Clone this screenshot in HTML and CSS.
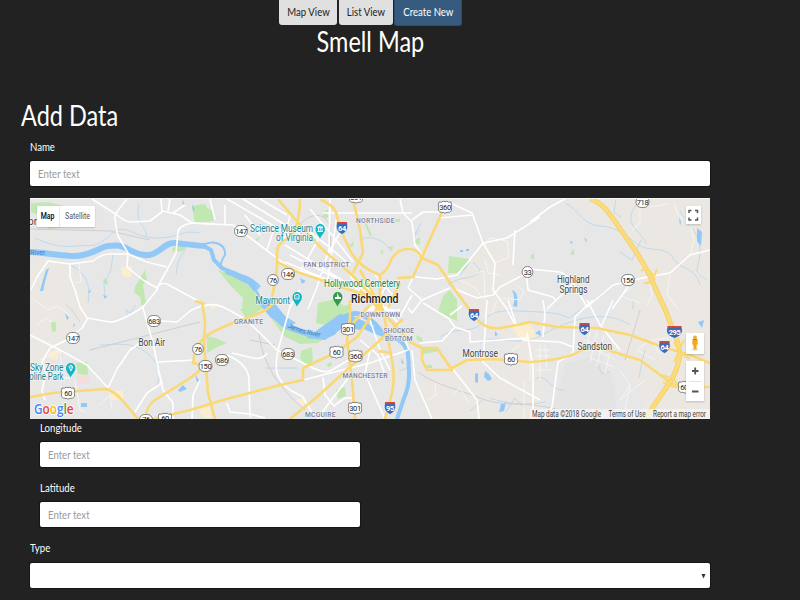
FILE: index.html
```html
<!DOCTYPE html>
<html lang="en">
<head>
<meta charset="utf-8">
<title>Smell Map</title>
<link rel="stylesheet" href="styles.css">
</head>
<body>
<div class="page">
  <nav class="tabs">
    <button class="tab tab-map"><span>Map View</span></button>
    <button class="tab tab-list"><span>List View</span></button>
    <button class="tab tab-new active"><span>Create New</span></button>
  </nav>
  <h1><span>Smell Map</span></h1>
  <h2><span>Add Data</span></h2>
  <form class="form">
    <label><span>Name</span></label>
    <div class="field"><span>Enter text</span></div>
    <div class="map">
      <svg class="canvas" viewBox="30 198 680 221" width="680" height="221">
        <defs>
          <g id="p3"><rect x="-6.5" y="-5.5" width="13" height="11" rx="5.2"/></g>
          <g id="p2"><rect x="-5.3" y="-5.5" width="10.6" height="11" rx="5.2"/></g>
          <g id="u3"><path d="M-6-5Q-3-4.2-2-5.8Q0-4.8 2-5.8Q3-4.2 6-5Q7.3-2 6.2 0Q7.6 4 4.5 5.2Q1.5 5 0 6.2Q-1.5 5-4.5 5.2Q-7.6 4-6.2 0Q-7.3-2-6-5Z"/></g>
          <g id="i"><path fill="#3d6cb5" stroke="#fff" stroke-width=".6" d="M-5-5.5H5C6.500-1 6 3.500 0 6.500C-6 3.500-6.500-1-5-5.500Z"/><path fill="#d8433c" d="M-4.900-6H4.900L5.200-4.200H-5.200Z"/></g>
          <path id="jr" d="M287 327Q302 335 323 337"/>
        </defs>
        <rect x="30" y="198" width="680" height="221" fill="#e7e7e7"/>
        <g fill="#ebe8e3">
          <path d="M30 262L48 259 70 264 92 300 83 325 60 345 40 390 30 395Z"/>
          <path d="M565 199H710V419H650L625 360 600 330 640 290 625 240Z"/>
          <path d="M452 285L485 243 514 232 516 290 507 320 540 330 545 419H430L416 385 470 360 520 355 490 325Z"/>
        </g>
        <path fill="#e4e4e5" d="M566 363L600 355 614 382 616 411H552Z"/>
        <g fill="#fbeed0">
          <path d="M121 267L132 266 131 278 122 276Z"/><path d="M50 352L60 350 57 360 49 358Z"/><path d="M511 326L530 322 537 338 523 343Z"/><path d="M108 390L123 391 123 399 112 400Z"/><path d="M199 409L210 407 211 418 202 417Z"/><path d="M296 400L305 398 304 407Z"/><path d="M209 303L217 307 212 310Z"/>
        </g>
        <path fill="#f4dddd" d="M77 376H90V384H78Z"/>
        <g class="park">
          <path d="M31 203L48 202 65 206V227L48 229 42 216 31 212Z"/>
          <path d="M192 206L205 204 207 208 214 211V221L195 223Z"/>
          <path d="M135 287L145 270 147 280 143 285 146 303 142 304 140 297 134 292Z"/>
          <path d="M172 248L180 245 187 248 182 251 173 252Z"/>
          <path d="M104 278L108 282 107 285 103 282ZM51 322H56V331L52 332ZM144 299L147 301 145 305Z"/>
          <path d="M218 270L233 275 257 291 268 306 254 313 242 307 243 298 230 285Z"/>
          <path d="M240 309L266 300 255 315 246 318Z"/>
          <path d="M207 336L216 338 227 343 217 347 207 353Z"/>
          <path d="M318 303L336 299 344 306 352 304 344 319 330 326 316 323Z"/>
          <path d="M266 311L285 327 305 336 325 338 318 343 300 344 284 336Z"/>
          <path d="M301 351L312 347 313 361 307 368 300 358Z"/>
          <path d="M336 390L345 387 346 396 338 399ZM327 364L331 362 332 366 328 367Z"/>
          <path d="M449 256L469 259 466 269 458 273 448 273Z"/>
          <path d="M450 290L457 300 457 321 438 312 443 296Z"/>
          <path d="M423 349L438 347 439 351 423 354ZM416 335L422 338 423 343 417 340ZM425 365H432V368H425Z"/>
          <path d="M76 363L87 362 88 375 78 374Z"/>
          <path d="M323 212L328 209V218L323 217ZM395 219H400V222H395ZM415 240L420 237V245L415 243ZM380 252L383 250V255ZM366 222L372 235 370 236 365 225ZM388 247L393 246 392 252ZM255 240L260 236 258 241ZM349 247L354 240 353 247ZM531 254H534V259H531ZM571 252L574 249V255H571ZM141 300H146V305H141Z"/>
        </g>
        <g class="stream">
          <path d="M35 238C45 243 60 248 75 246S95 250 110 235 135 240 160 238 180 230 200 233"/>
          <path d="M70 265Q93 275 88 303M113 254L111 270 104 284 105 297M139 204C134 225 148 225 146 237M143 253L147 262M185 250L178 262 176 275"/>
          <path d="M136 305L130 313 126 310 128 317M66 305L72 310 80 322M100 345C115 345 135 340 150 356S158 375 157 387"/>
          <path d="M359 240C370 234 385 240 390 250M389 285L384 293M420 230L413 238 421 223"/>
          <path d="M565 203C580 210 582 225 600 226S625 235 637 244 665 245 673 258 695 266 700 285"/>
          <path d="M616 199L614 212 621 217M636 205C622 225 640 230 646 243M620 252L632 260 641 240M680 210C685 225 700 230 700 250S690 270 707 280"/>
          <path d="M448 285C460 275 478 280 480 270L473 262M440 337C458 325 472 335 483 322S500 310 540 312 560 325 580 310"/>
          <path d="M480 343C500 332 510 348 538 337 560 325 600 305 630 325M490 398C510 405 530 405 545 402M598 365L602 374 610 372M645 350L642 362 639 378M686 205Q688 218 700 222M633 300L633 309M413 360Q405 372 399 370M266 368L298 368"/>
          <path d="M535 380C545 370 550 392 565 390M506 412L515 398 525 408M460 275L470 262M470 411L484 399"/>
        </g>
        <g class="water">
          <path class="river" d="M30 252C50 253 60 256 75 256S100 247 108 246 120 245 126 248 139 256 149 255 165 242 175 243 200 246 206 246"/>
          <path stroke-width="4" d="M204 246L211 250 214 260 222 268 234 274"/>
          <path class="river" d="M226 271L234 274 250 282 257 290"/>
          <path d="M205 244C216 240 226 245 225 255Q221 260 220 269M234 274Q250 275 260 287M250 285Q258 290 259 297" stroke-width="2"/>
          <path class="river" d="M262 302C275 312 280 325 291 328S308 336 323 335 332 329 341 323 352 318 360 323 375 332 385 334"/>
          <path d="M345 317Q355 310 366 317T382 333" stroke-width="5"/>
          <path d="M380 334C392 336 407 341 408 355S411 383 404 398L397 419" stroke-width="4"/>
        </g>
        <g fill="#91c8f7">
          <path d="M258 302L272 300 285 316 296 323 286 327 270 317Z"/>
          <path d="M340 314L357 318 370 324 360 330 344 327 325 340 306 338Z"/>
          <path d="M46 270L49 268 46 278 43 291 40 291 43 280Z"/><path d="M65 313L69 318 67 320ZM73 325L75 323 74 328ZM103 295L107 296 105 299ZM91 289L90 293 88 292Z"/>
          <path d="M178 390L183 385 187 389 180 392ZM81 403H87V407H81Z"/><path d="M485 371L489 374 492 379 488 381 484 377ZM475 374L478 373 478 383 475 382Z"/><path d="M697 228L702 232 701 246 697 241ZM679 217L681 222 680 226ZM698 322L704 320 702 328Z"/>
          <path d="M512 290Q519 292 517 307L513 306Q516 299 512 290ZM460 250H463V252H460ZM466 249H469V251H466ZM535 333L540 330 541 336ZM300 278L306 281 302 284ZM495 331L498 335 495 336ZM570 241L573 242 571 244ZM584 237L587 240 586 242ZM192 204L195 210 193 211ZM182 199L185 205 183 204ZM195 375L200 381 197 382ZM499 412L501 404 506 402 504 411ZM401 358L404 363 402 364ZM673 332L676 331 675 336Z"/>
        </g>
        <path class="rail" d="M30 229L110 231 150 240M90 350L200 322M418 372C435 385 455 388 480 398S520 400 560 410M250 340L275 345M259 333C262 360 275 385 305 410M300 224Q320 206 330 225L331 250M640 310L625 360"/>
        <g class="minor">
          <path d="M75 283L81 282 79 264M31 297L48 310 58 306 70 316M40 360L60 350 62 370M52 375L60 380 72 377M75 380L80 410 85 412M36 325L46 318 52 322M100 405L110 395 112 410M40 375L70 378"/>
          <path d="M485 245L490 238 507 241 509 257 497 262M485 260L488 273 500 275M460 280L475 288 482 298M476 273L484 271 485 300M503 298L520 300 524 291 517 285M497 300L492 314M452 395L460 388 468 402M435 385L436 395 428 400M520 345L512 350 518 362M530 345V380M535 350H550M535 356H550M540 345V380M545 345L547 370M535 370H552M524 380V418"/>
          <path d="M590 332L587 345 615 360M585 340L618 355M597 332L590 362M604 335L597 366M612 342L605 374M590 358L615 367M630 385L620 400 645 380M620 370L630 385 625 410M670 275L667 295 679 310M640 207V223L632 230M674 203L678 215 690 223 694 240 690 255M632 287L621 296 640 303M647 305L652 295 650 285M668 204L650 207M650 340L637 350 655 360M660 355L652 340 668 338"/>
        </g>
        <g class="road">
          <path d="M127 199C120 208 114 214 115 219S116 230 118 236L128 253 127 267 143 280 157 288Q160 282 167 284L200 302"/>
          <path d="M92 199L117 215Q125 222 132 222L150 221 163 211 180 215 192 223M162 211L161 199M168 211L170 199M173 213L185 205"/>
          <path d="M31 290L37 277 48 261 70 264 93 261Q100 255 108 254L128 254 147 262 167 267"/>
          <path d="M215 224L192 223Q178 226 178 232L176 253 167 270Q158 285 157 290L143 307Q120 322 110 322L87 318 80 307 75 290 70 277V264"/>
          <path d="M143 308L153 343 158 367 163 390 173 403V419M30 335L60 350 87 365 108 388 117 369 130 350 140 343M50 348L67 340 82 328 88 318M50 348L42 362 46 373 42 390 45 400M147 320L177 322 190 311Q210 300 225 308T245 319L260 333 277 350 307 365Q325 375 332 370L352 358"/>
          <path d="M158 362L195 360M135 412L147 393 162 383 158 370M300 290L290 307 278 350Q275 365 277 373T290 390L303 397 312 413 323 419M227 355Q250 365 249 382L250 417M232 353L253 358Q263 360 267 353M227 403L230 412 250 414 265 418M200 380L193 395 192 419M303 380L370 363 408 350M323 377L325 395 335 407M317 419L352 373M335 405L345 398 355 398"/>
          <path d="M190 223L233 225 257 243 290 268 330 280M227 199L293 237M210 199L215 220M225 205V224M243 199L310 240M260 199L287 215M245 215L260 235M275 226L267 250M290 215L284 240M330 199L329 250 317 287 308 309M323 213H412M310 209L336 240 353 262M300 225L328 246 350 265M285 245L350 285M290 255L370 295M285 262L340 285M318 240L301 270M337 215L327 285M346 222L328 254"/>
          <path d="M400 199L403 213 412 222 415 245 422 255M412 220L423 212H440M440 218L472 215M448 202L472 213 483 243 495 263 493 290 507 309 515 325M540 217L507 238 483 243 468 262 457 275 437 279 415 277M515 230L513 265M453 288L477 298 493 295 500 287 523 275 530 269 560 272Q570 277 573 283L587 307M587 307L613 285 647 277 670 273 690 255 710 250M530 222L550 207 565 199M526 270L528 290 553 297 556 301M547 309L573 284M628 287L612 309M413 277L408 288 422 300 450 288M422 300L412 313 408 308M412 295L399 318"/>
          <path d="M587 300L600 325 620 350M613 300L602 325M593 300L575 317 573 353 558 362 552 407 545 419M543 300L545 313 543 337M522 340L560 342 573 347M487 300L483 362 500 378 540 400M452 368L477 400 479 419M412 350L415 380 432 419M420 343L442 341 455 327 448 318 423 303M455 327L470 332V342L527 338M450 315L462 306M527 333L533 367V419M508 300L517 327M370 320L380 350 390 370M360 340L378 355 385 375M370 350L365 374 385 419M409 350L405 340"/>
          <path d="M355 320L375 305 363 290M375 275L397 300M365 285L400 325M350 276L380 310M390 280L372 310M400 283L385 310M368 310H400M377 304L402 316"/>
        </g>
        <g class="highway">
          <path d="M30 397L53 393Q90 390 107 389 116 393 123 401L138 419M145 419Q147 405 155 400T187 380 193 363Q195 345 205 337T247 318 272 297Q278 270 277 257T285 240 297 223 300 199"/>
          <path d="M153 419L190 410 223 400 280 385 303 380V368L337 352 357 337 370 318 380 305M202 303L205 320 204 343 206 367 208 393 215 419M195 301L205 304M290 419L317 397 350 367 377 343 403 319"/>
          <path d="M278 199L293 217 323 250 350 273 380 304M320 199Q337 207 337 217L342 233 350 250Q358 267 380 275 388 270 391 260 397 249 408 249T422 258L438 265Q445 275 450 283L475 317Q485 330 500 328T530 322L557 327 597 328 630 335 663 347 690 355 710 363"/>
          <path d="M277 262L300 273 327 282 370 297 387 317M353 199L360 230 363 253 353 273M445 202L440 217 422 257 413 277 397 278M350 300V318L347 340 352 380 355 419M380 275V300L385 320 390 350Q396 375 392 393L385 419"/>
          <path d="M360 270L385 315M360 290L395 325M400 283L388 307M387 317L410 342 422 348H437L452 370H427L422 360V348M452 368L467 360 493 359 530 362Q565 360 580 351T610 351L640 360 663 377Q673 387 685 387H710M378 351L391 353M370 305L353 323"/>
          <path class="wide-edge" d="M590 199C605 203 610 215 630 243S653 285 665 309L678 343Q683 358 672 379L645 419"/>
          <path class="wide" d="M590 199C605 203 610 215 630 243S653 285 665 309L678 343Q683 358 672 379L645 419"/>
          <path class="ramp" d="M641 271Q650 265 655 280M644 283Q652 285 657 269M661 375Q671 376 681 387 671 388 663 382M674 342Q680 355 690 359M684 340L674 362"/>
        </g>
        <g class="shield">
          <use href="#p3" x="241" y="231"/><use href="#p3" x="288" y="274"/><use href="#p2" x="273" y="280"/><use href="#p3" x="154" y="321"/><use href="#p3" x="73" y="338"/><use href="#p2" x="198" y="349"/><use href="#p3" x="222" y="360"/><use href="#p3" x="205.500" y="366"/><use href="#p3" x="288" y="354"/><use href="#p3" x="628" y="280"/><use href="#p3" x="642.500" y="202"/><use href="#p2" x="527.500" y="272"/><use href="#p3" x="146" y="420"/>
          <use href="#u3" x="445" y="207"/><use href="#u3" x="356" y="197"/><use href="#u3" x="348" y="329"/><use href="#u3" x="336.500" y="352"/><use href="#u3" x="355.500" y="356"/><use href="#u3" x="355" y="408"/><use href="#u3" x="68" y="393"/><use href="#u3" x="511" y="359"/><use href="#u3" x="165" y="419"/><use href="#u3" x="685" y="387"/>
        </g>
        <g class="num">
          <text x="241" y="233.700">147</text><text x="288" y="276.700">146</text><text x="273" y="282.700">76</text><text x="154" y="323.700">683</text><text x="73" y="340.700">147</text><text x="198" y="351.700">76</text><text x="222" y="362.700">686</text><text x="205.500" y="368.700">150</text><text x="288" y="356.700">683</text><text x="628" y="282.700">156</text><text x="642.500" y="204.700">718</text><text x="527.500" y="274.700">33</text><text x="146" y="422">76</text>
          <text x="445" y="209.700">360</text><text x="356" y="200">301</text><text x="348" y="331.700">301</text><text x="336.500" y="354.700">60</text><text x="355.500" y="358.700">360</text><text x="355" y="410.700">301</text><text x="68" y="395.700">60</text><text x="511" y="361.700">60</text><text x="165" y="421">60</text><text x="684" y="389.700">60</text>
        </g>
        <g><use href="#i" x="342" y="228"/><use href="#i" x="474" y="315"/><use href="#i" x="584.500" y="329"/><use href="#i" x="664.500" y="347"/><use href="#i" x="390" y="408"/><use href="#i" transform="translate(674.500 332) scale(1.400 1)"/></g>
        <g class="num inum"><text x="342" y="230.800">64</text><text x="474" y="317.800">64</text><text x="584.500" y="331.800">64</text><text x="664.500" y="349.800">64</text><text x="390" y="410.800">95</text><text x="674.500" y="334.800">295</text></g>
        <g class="pin">
          <path id="pin" fill="#12b5c4" d="M320 239C319 235 315.500 233.500 315.500 229A4.700 5 0 0 1 324.900 229C324.900 233.500 321 235 320 239Z"/>
          <use href="#pin" x="-23" y="68"/><use href="#pin" x="-249.500" y="139"/>
          <path fill="#2fa04a" d="M337.500 307C336.500 303 333 301.500 333 297A4.700 5 0 0 1 342.400 297C342.400 301.500 338.500 303 337.500 307Z"/>
          <path fill="none" stroke="#fff" stroke-width=".9" d="M317.500 227.500L320.200 226 323 227.500ZM318.500 228V231M320.200 228V231M322 228V231M317.500 231.500H323M294.500 295H296L297 294 299 295V299H295ZM297 296.500V297.500M69 366.500Q71 363.500 72.700 367L71 371ZM70 367H72"/>
          <path fill="#fff" d="M337.500 292.500L339 297H341V299H335V297H337Z"/>
        </g>
        <g class="poi">
          <text x="250" y="231.700" textLength="63" lengthAdjust="spacingAndGlyphs">Science Museum</text>
          <text x="276" y="241.200" textLength="37" lengthAdjust="spacingAndGlyphs">of Virginia</text>
          <text x="255.500" y="303.700" textLength="34.500" lengthAdjust="spacingAndGlyphs">Maymont</text>
          <text x="30" y="370.700" textLength="33.500" lengthAdjust="spacingAndGlyphs">Sky Zone</text>
          <text x="25" y="380" textLength="38.500" lengthAdjust="spacingAndGlyphs">poline Park</text>
          <text class="green" x="324" y="286.700" textLength="76" lengthAdjust="spacingAndGlyphs">Hollywood Cemetery</text>
        </g>
        <g class="town">
          <text class="city" x="351" y="303" textLength="47.500" lengthAdjust="spacingAndGlyphs">Richmond</text>
          <text x="138.500" y="345.700" textLength="26.500" lengthAdjust="spacingAndGlyphs">Bon Air</text>
          <text x="462.500" y="356.700" textLength="35.500" lengthAdjust="spacingAndGlyphs">Montrose</text>
          <text x="577.500" y="349.500" textLength="34.500" lengthAdjust="spacingAndGlyphs">Sandston</text>
          <text x="557" y="283.200" textLength="32.500" lengthAdjust="spacingAndGlyphs">Highland</text>
          <text x="559.500" y="292.700" textLength="28" lengthAdjust="spacingAndGlyphs">Springs</text>
          <text x="28" y="225">or</text>
        </g>
        <g class="area">
          <text x="303.500" y="267.200" textLength="46">FAN DISTRICT</text><text x="356" y="223.200" textLength="38.500">NORTHSIDE</text><text x="360.500" y="316.700" textLength="39.500">DOWNTOWN</text><text x="383.500" y="333.200" textLength="30.500">SHOCKOE</text><text x="385" y="340.900" textLength="27.500">BOTTOM</text><text x="234" y="324" textLength="29">GRANITE</text><text x="342.500" y="377.700" textLength="45">MANCHESTER</text><text x="305" y="416.700" textLength="30.500">MCGUIRE</text>
        </g>
        <g class="flow"><text x="30" y="255">River</text><text><textPath href="#jr" textLength="35">James River</textPath></text></g>
        <text class="logo" x="34" y="413.500" textLength="39.500" lengthAdjust="spacingAndGlyphs"><tspan fill="#4285f4">G</tspan><tspan fill="#ea4335">o</tspan><tspan fill="#fbbc05">o</tspan><tspan fill="#4285f4">g</tspan><tspan fill="#34a853">l</tspan><tspan fill="#ea4335">e</tspan></text>
        <rect x="530" y="409" width="180" height="10" fill="#f5f5f5" opacity=".75"/>
        <g class="credits">
          <text x="532" y="416.500" textLength="69" lengthAdjust="spacingAndGlyphs">Map data ©2018 Google</text>
          <text x="608.500" y="416.500" textLength="37" lengthAdjust="spacingAndGlyphs">Terms of Use</text>
          <text x="653" y="416.500" textLength="53" lengthAdjust="spacingAndGlyphs">Report a map error</text>
        </g>
        <path d="M30 198.500H710" stroke="#f6f6f6"/>
      </svg>
      <div class="maptype"><b><span>Map</span></b><i><span>Satellite</span></i></div>
      <div class="ctl full"><svg width="15" height="18" viewBox="0 0 15 18"><path d="M3 7V4.500H5.500M9 4.500H11.500V7M11.500 11.500V14H9M5.500 14H3V11.500" fill="none" stroke="#555" stroke-width="1.500"/></svg></div>
      <div class="ctl peg"><svg width="18" height="21" viewBox="0 0 18 21"><ellipse cx="9" cy="16.500" rx="3.500" ry="1" fill="#ddd"/><path d="M6.500 6H11.500L11.800 11.500H10.800L10.500 16.500H7.600L7.200 11.500H6.200Z" fill="#f5a81c"/><circle cx="9" cy="4.500" r="2" fill="#edb12b"/><path d="M7 6.500H11" stroke="#c97b12"/></svg></div>
      <div class="ctl zoom"><svg width="18" height="40" viewBox="0 0 18 40"><path d="M6 10H12.500M9.200 6.500V13.500M6 30.500H12.500" stroke="#555" stroke-width="1.800"/><path d="M3 20.500H15" stroke="#e3e3e3"/></svg></div>
    </div>
    <div class="inner">
      <label><span>Longitude</span></label>
      <div class="field"><span>Enter text</span></div>
      <label class="lat"><span>Latitude</span></label>
      <div class="field"><span>Enter text</span></div>
    </div>
    <label class="type"><span>Type</span></label>
    <div class="field select"><svg width="5" height="6" viewBox="0 0 5 6"><path d="M.5 1H4.500L2.500 5.500Z" fill="#333"/></svg></div>
  </form>
</div>
</body>
</html>
```
FILE: styles.css
```css
* { box-sizing: border-box; }
body { margin: 0; height: 600px; overflow: hidden; background: #222; color: #fff; font-family: Lato, sans-serif; }
.page { width: 740px; }
.tabs { display: flex; justify-content: center; gap: 1.5px; height: 26px; padding-left: 1px; }
.tab { height: 25px; padding: 0; border: 0; border-radius: 0 0 3px 3px; background: #e0e0e0; color: #222; font: 12px/24px Lato, sans-serif; white-space: nowrap; display: flex; justify-content: center; }
.tab span, h1 span, h2 span, label span, .field span, .maptype span { display: inline-block; transform: scaleX(.8); }
.tab span { flex: none; }
.tab-map { width: 58px; }
.tab-list { width: 54px; }
.tab-new { width: 68px; height: 26px; }
.active { background: #375a7f; color: #fff; border: 1.5px solid #2b4c70; border-top: 0; }
h1, h2 { margin: 0; font-weight: 400; font-size: 29px; line-height: 34px; }
h1 { text-align: center; margin-top: -2px; }
h1 span { transform: scaleX(.81); }
h2 { margin: 40px 0 0 20.5px; height: 35px; }
h2 span, label span, .field span { transform-origin: left; }
h2 span { transform: scaleX(.81); }
.form { width: 680px; margin-left: 30px; }
label { display: block; height: 28px; padding-top: 7px; font-size: 12px; line-height: 14px; }
.field { display: flex; align-items: center; height: 25px; padding-left: 8px; background: #fff; border-radius: 2px; color: #999; font-size: 12px; box-shadow: 0 0 0 1px #151515; }
.map { position: relative; height: 221px; margin-top: 12px; overflow: hidden; }
.canvas { display: block; }
.inner { width: 330px; padding-left: 10px; }
.inner label { height: 23px; padding-top: 2px; }
.inner .lat { height: 35px; padding-top: 14px; }
label.type { height: 36px; padding-top: 14px; }
.select { justify-content: flex-end; padding-right: 4px; }

.park { fill: #c1e8b1; }
.stream { fill: none; stroke: #b4d5ef; stroke-width: .8; }
.water { fill: none; stroke: #91c8f7; }
.river { stroke-width: 6; }
.rail { fill: none; stroke: #cfcfd1; stroke-width: 1; }
.minor { fill: none; stroke: #f7f6f4; stroke-width: .9; }
.road { fill: none; stroke: #fff; stroke-width: 1.6; stroke-linejoin: round; }
.highway { fill: none; stroke-linejoin: round; stroke: #fad873; stroke-width: 2.6; }
.wide-edge { stroke-width: 5; stroke: #f3cf6c; }
.wide { stroke-width: 3.4; stroke: #fbdc78; }
.ramp { stroke-width: 1.8; }
.shield { fill: #fff; stroke: #666; stroke-width: .8; }
.num { font: 7.5px Roboto, sans-serif; text-anchor: middle; fill: #222; letter-spacing: -.4px; }
.inum { fill: #fff; font-weight: 700; }
.poi, .town { font: 10px Roboto, sans-serif; fill: #138496; stroke: #fff; stroke-width: 1.4px; stroke-opacity: .7; paint-order: stroke; stroke-linejoin: round; }
.poi .green { fill: #22854b; }
.town { fill: #444; }
.town .city { font-size: 13px; font-weight: 500; fill: #222; }
.area { font: 500 6.8px Roboto, sans-serif; fill: #7c819c; stroke: #f2f2f2; stroke-width: 1.2px; paint-order: stroke; }
.flow { font: 7px Roboto, sans-serif; fill: #3f80bf; }
.logo { font: 600 14px "Open Sans", sans-serif; stroke: #fff; stroke-width: 1.5px; paint-order: stroke; }
.credits { font: 8.4px Roboto, sans-serif; fill: #444; }
.maptype { position: absolute; left: 7px; top: 8px; width: 58px; height: 21px; display: flex; background: #fff; border-radius: 1px; font: 8.7px/21px Roboto, sans-serif; box-shadow: 0 1px 2px #0003; text-align: center; }
.maptype b { width: 23px; color: #000; font-weight: 500; border-right: 1px solid #e8e8e8; }
.maptype i { width: 35px; color: #565656; font-style: normal; }
.ctl { position: absolute; background: #fff; box-shadow: 0 1px 2px #0003; }
.ctl svg { display: block; }
.full { left: 656px; top: 8px; }
.peg { left: 656px; top: 135px; }
.zoom { left: 656px; top: 163px; }
```
